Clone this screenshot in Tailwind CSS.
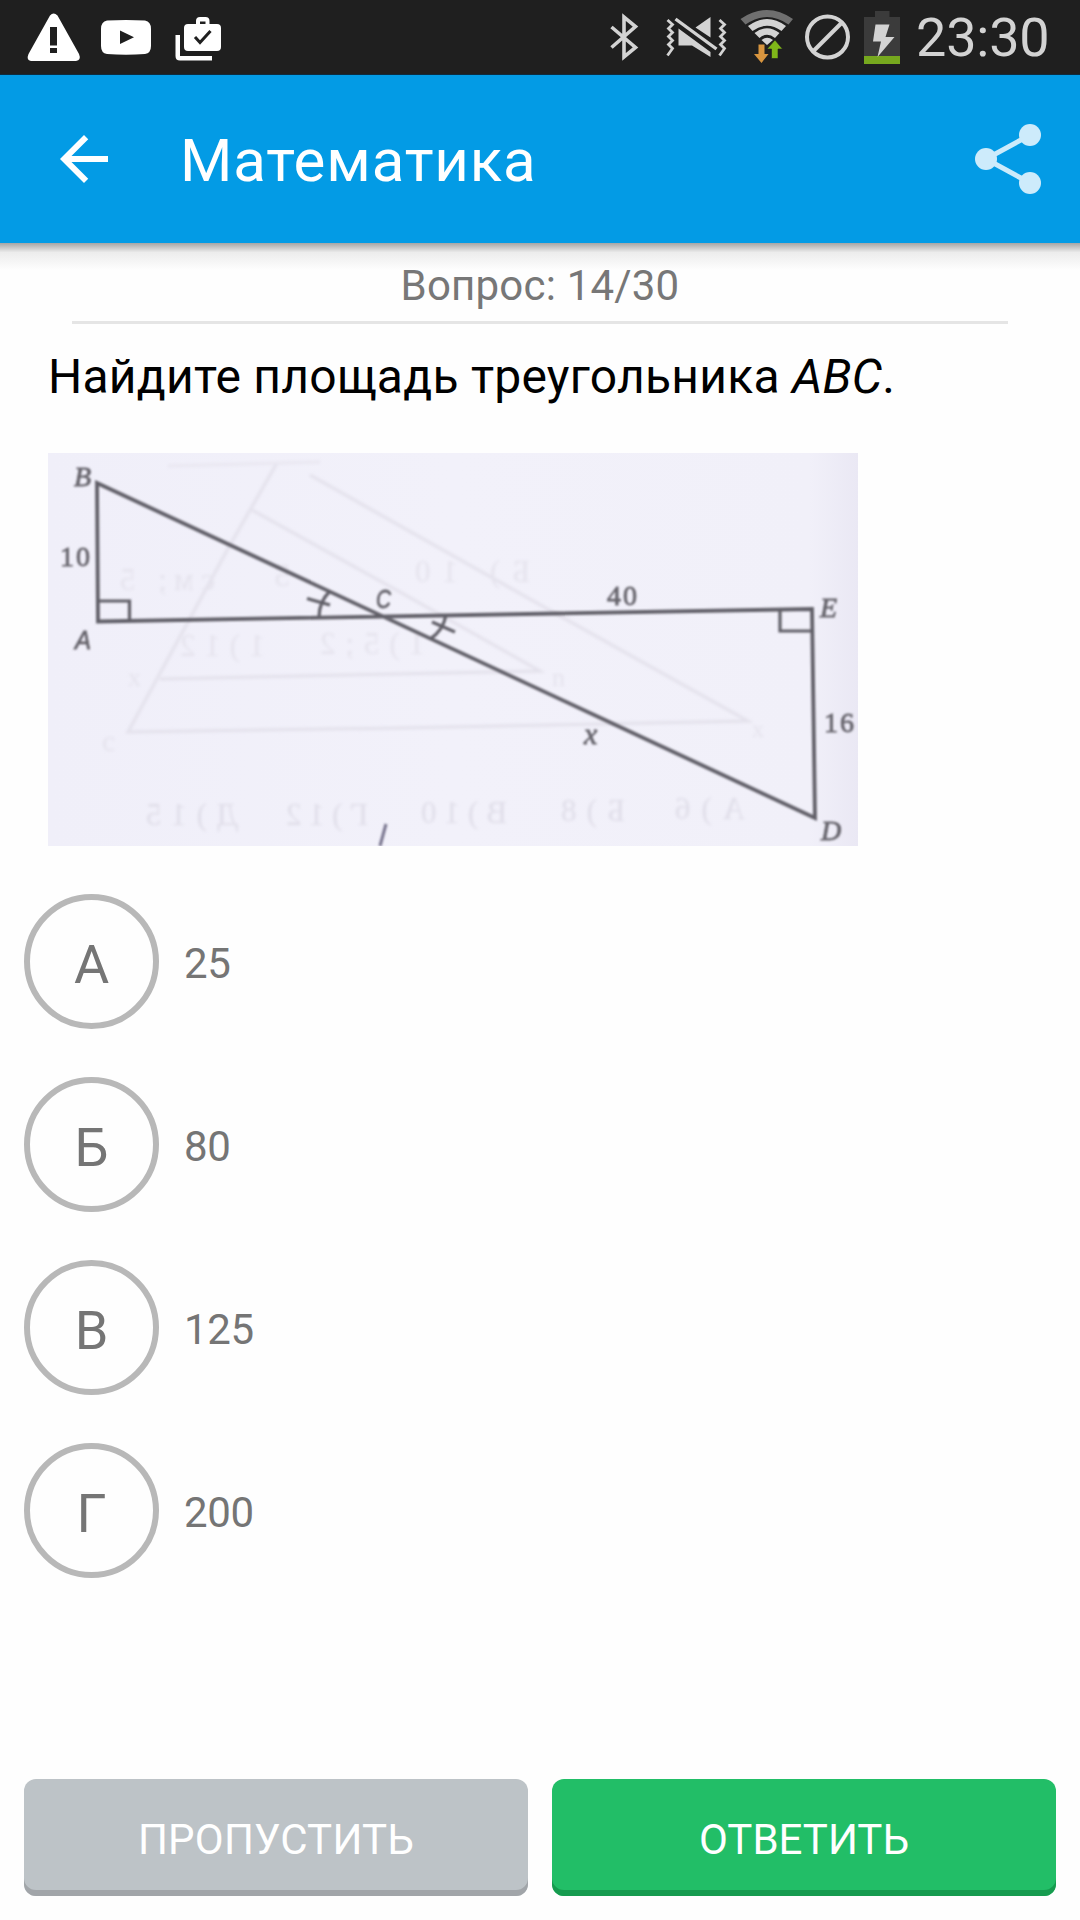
<!DOCTYPE html>
<html lang="ru">
<head>
    <meta charset="utf-8">
    <meta name="viewport" content="width=device-width, initial-scale=1">
    <title>Математика</title>
    <script src="https://cdn.jsdelivr.net/npm/@tailwindcss/browser@4"></script>
</head>
<body class="bg-[#fefefe] font-['Roboto','Noto_Sans',sans-serif]">
<div class="flex flex-col w-[1080px] h-[1920px] overflow-hidden">

    <!-- status bar -->
    <div class="flex h-[75px] shrink-0 bg-[#1f1f1f] border-b border-[#0d2c40]">
        <svg class="w-[900px] h-[74px] shrink-0" viewBox="0 0 900 74">
            <path fill="#fff" fill-rule="evenodd" d="M50 15.500Q53.500 11.500 57.500 15.500L79 54Q81.500 60 76 61H31Q26 60 28.500 54ZM50 27v18.500h7V27ZM50 48v5h7V48Z"/>
            <path fill="#fff" fill-rule="evenodd" d="M107 20.500Q126 19.500 145 20.500Q151 21.500 151 29V46Q151 53 145 54Q126 55.500 107 54Q101 53 101 46V29Q101 21.500 107 20.500ZM120 30.500V44L134 37.300Z"/>
            <path fill="#fff" fill-rule="evenodd" d="M175.500 35H180V56H212V60.500H180Q175.500 60.500 175.500 56ZM188 24H196V21Q196 17 200 17H205.500Q209.500 17 209.500 21V24H217Q221 24 221 28V47Q221 51 217 51H188Q184 51 184 47V28Q184 24 188 24ZM200 21.500V24H205.500V21.500Z"/>
            <path fill="none" stroke="#1f1f1f" stroke-width="3" d="M195 37L200 42.500L210.500 31"/>
            <!-- bluetooth -->
            <path fill="none" stroke="#d3d3d3" stroke-width="3.600" d="M611.500 27L635.500 47.500L624 57V17L635.500 26.500L611.500 47.500"/>
            <!-- vibrate / muted -->
            <g fill="none" stroke="#d3d3d3" stroke-width="2.800">
                <path d="M667.500 20L672.500 24.500L668.500 28.500L672.500 32.500L668.500 36.500L672.500 40.500L668.500 44.500L672.500 48.500L667.500 55.500"/>
                <path d="M719.500 20L724.500 24.500L720.500 28.500L724.500 32.500L720.500 36.500L724.500 40.500L720.500 44.500L724.500 48.500L719.500 55.500"/>
                <path stroke-width="3.400" d="M675.500 19L716.500 49"/>
            </g>
            <path fill="#d3d3d3" d="M695.500 27.500L710.500 17V37.500ZM678.500 28.500L710.500 52V57L692 45.500H678.500Z"/>
            <!-- wifi -->
            <path fill="#6f6f6f" d="M740.500 19Q767 1 793 19L788.500 24.500Q767 9.500 745.500 24.500Z"/>
            <path fill="#d3d3d3" d="M748 26Q767 12 786 26L781.500 31Q767 20.500 752.500 31ZM754.500 33Q767 23.500 779.500 33L775 38Q767 31.500 759.500 38ZM761.500 40Q767 35.500 773 40L767 45Z"/>
            <path fill="#d8953f" d="M758.500 44.500H764.500V54H768.500L761.500 63L754 54H758.500Z"/>
            <path fill="#7fb719" stroke="#1f1f1f" stroke-width=".6" d="M775 40L782.500 49H778V58.500H771.500V49H767Z"/>
            <!-- blocked -->
            <circle cx="827.500" cy="37" r="20.500" fill="none" stroke="#d3d3d3" stroke-width="4"/>
            <path stroke="#d3d3d3" stroke-width="4" d="M813.500 51L841.500 23"/>
            <!-- battery -->
            <path fill="#3b3b3b" d="M875 11H889.500V17H900V56H864V17H875Z"/>
            <path fill="#76a81e" d="M864 56H900V64H864Z"/>
            <path fill="#d3d3d3" d="M875.500 24.500H889.500L885.500 37H894.500L877.500 57L881 41.500H873Z"/>
        </svg>
        <div class="pl-4 pt-px text-[54px] leading-[74px] tracking-[-0.2px] text-[#d3d3d3]">23:30</div>
    </div>

    <!-- app bar -->
    <header class="relative z-10 flex items-center h-[168px] shrink-0 pl-12 pr-6 bg-[#039be5] text-white">
        <svg class="size-[72px]" viewBox="0 0 24 24" fill="currentColor"><path d="M20 11H7.830l5.590-5.590L12 4l-8 8 8 8 1.410-1.410L7.830 13H20v-2z"/></svg>
        <h1 class="ml-[60px] pt-1 text-[60px] leading-[72px] tracking-[0.85px]">Математика</h1>
        <svg class="ml-auto w-24 h-24" viewBox="960 111 96 96" fill="#cdebfb" stroke="#cdebfb">
            <path fill="none" stroke-width="5" d="M1030 135L986 159L1030 183"/>
            <g stroke="none"><circle cx="986" cy="159" r="11"/><circle cx="1030" cy="135" r="11"/><circle cx="1030" cy="183" r="11"/></g>
        </svg>
    </header>
    <div class="h-[27px] -mb-[27px] shrink-0 bg-linear-to-b from-black/35 via-black/7 via-35% to-transparent"></div>

    <div class="mx-[72px] h-[81px] shrink-0 pt-[18px] border-b-3 border-[#e5e5e5] text-center text-[42px] leading-[49px] tracking-[0.2px] text-[#777]">Вопрос: 14/30</div>

    <p class="mt-[25px] ml-12 text-[48px] leading-[56px] tracking-[0.25px] text-black whitespace-nowrap">Найдите площадь треугольника <i>ABC</i>.</p>

    <!-- scanned figure -->
    <svg class="mt-12 ml-12 w-[810px] h-[393px] shrink-0" viewBox="48 453 810 393">
        <defs>
            <linearGradient id="paper"><stop offset="0" stop-color="#f0eff9"/><stop offset=".5" stop-color="#f2f1fa"/><stop offset=".94" stop-color="#f1f0f9"/><stop offset="1" stop-color="#eae8f4"/></linearGradient>
            <filter id="soft" filterUnits="userSpaceOnUse" x="48" y="453" width="810" height="393"><feGaussianBlur stdDeviation=".8"/></filter>
            <filter id="ghost" filterUnits="userSpaceOnUse" x="48" y="453" width="810" height="393"><feGaussianBlur stdDeviation="1.600"/></filter>
        </defs>
        <path fill="url(#paper)" d="M48 453H858V846H48Z"/>
        <!-- print showing through from the back of the page -->
        <g filter="url(#ghost)">
            <g fill="none" stroke="#e3e1eb" stroke-width="3">
                <path d="M277 463L230 545L128 732L400 728L748 721L560 616L310 475"/>
                <path d="M160 679L540 671L400 592L252 510"/>
                <path stroke="#e9e7f1" d="M168 466L320 462"/>
            </g>
            <g fill="#dfdde8" font-family="Liberation Serif" font-size="31">
                <text transform="translate(238 825) scale(-1 1)" textLength="92">Д)15</text>
                <text transform="translate(368 825) scale(-1 1)" textLength="82">Г)12</text>
                <text transform="translate(507 823) scale(-1 1)" textLength="86">В)10</text>
                <text transform="translate(625 821) scale(-1 1)" textLength="64">Б)8</text>
                <text transform="translate(745 819) scale(-1 1)" textLength="70">А)6</text>
            </g>
            <g fill="#e5e3ed" font-family="Liberation Serif" font-size="31">
                <text transform="translate(215 590) scale(-1 1)" textLength="95">см; 5</text>
                <text transform="translate(290 586) scale(-1 1)">5</text>
                <text transform="translate(530 582) scale(-1 1)" textLength="115">Б) 10</text>
                <text transform="translate(265 656) scale(-1 1)" textLength="85">1)12</text>
                <text transform="translate(425 654) scale(-1 1)" textLength="105">1)5;2</text>
                <text x="128" y="686" font-size="26">x</text>
                <text x="552" y="686" font-size="26">n</text>
                <text x="102" y="751" font-size="30">c</text>
                <text x="752" y="737" font-size="24">x</text>
            </g>
        </g>
        <g filter="url(#soft)">
            <path fill="none" stroke="#615f67" stroke-width="3.800" d="M98 621.500L97 483L815 818L812 609L98 621.500Z"/>
            <g fill="none" stroke="#615f67" stroke-width="3.200">
                <path d="M98 601H129.500V620M780 611V631H812"/>
                <path d="M330 591Q319 602 319 617M307 598.500L330 605M446 615Q443 631 430 639M432 622L455 632"/>
            </g>
            <path stroke="#77738d" stroke-width="3" d="M380 846L386 824"/>
            <g fill="#66646c" stroke="#66646c" stroke-width=".8" font-family="Liberation Serif" font-size="28">
                <text x="74" y="486" font-style="italic">B</text>
                <text x="60" y="566" textLength="30">10</text>
                <text x="75" y="649" font-style="italic" font-family="Liberation Sans" font-size="26" textLength="16" lengthAdjust="spacingAndGlyphs">A</text>
                <text x="376" y="608" font-style="italic" font-family="Liberation Sans" font-size="26" textLength="15" lengthAdjust="spacingAndGlyphs">C</text>
                <text x="607" y="605" textLength="30">40</text>
                <text x="820" y="617" font-style="italic">E</text>
                <text x="824" y="732" textLength="30">16</text>
                <text x="584" y="744" font-style="italic" font-size="30">x</text>
                <text x="821" y="840" font-style="italic">D</text>
            </g>
        </g>
    </svg>

    <!-- answers -->
    <ul class="mt-12 ml-6 flex flex-col gap-12 text-[42px] text-[#757575]">
        <li class="flex items-center gap-[25px] h-[135px]">
            <span class="flex items-center justify-center size-[135px] pt-[5px] rounded-full border-6 border-[#b8b8b8] text-[54px]">А</span>
            <span class="pt-[3px] tracking-[-0.3px]">25</span>
        </li>
        <li class="flex items-center gap-[25px] h-[135px]">
            <span class="flex items-center justify-center size-[135px] pt-[5px] rounded-full border-6 border-[#b8b8b8] text-[54px]">Б</span>
            <span class="pt-[3px] tracking-[-0.3px]">80</span>
        </li>
        <li class="flex items-center gap-[25px] h-[135px]">
            <span class="flex items-center justify-center size-[135px] pt-[5px] rounded-full border-6 border-[#b8b8b8] text-[54px]">В</span>
            <span class="pt-[3px] tracking-[-0.3px]">125</span>
        </li>
        <li class="flex items-center gap-[25px] h-[135px]">
            <span class="flex items-center justify-center size-[135px] pt-[5px] rounded-full border-6 border-[#b8b8b8] text-[54px]">Г</span>
            <span class="pt-[3px] tracking-[-0.3px]">200</span>
        </li>
    </ul>

    <!-- actions -->
    <div class="mt-auto mb-6 px-6 flex gap-6 text-[42px] leading-[49px] text-white">
        <button class="flex-1 h-[117px] pt-1 rounded-xl bg-[#bdc3c7] shadow-[inset_0_-6px_0_#a1a5a9] tracking-[0.2px]">ПРОПУСТИТЬ</button>
        <button class="flex-1 h-[117px] pt-1 rounded-xl bg-[#22be67] shadow-[inset_0_-6px_0_#169b4f]">ОТВЕТИТЬ</button>
    </div>
</div>
</body>
</html>
